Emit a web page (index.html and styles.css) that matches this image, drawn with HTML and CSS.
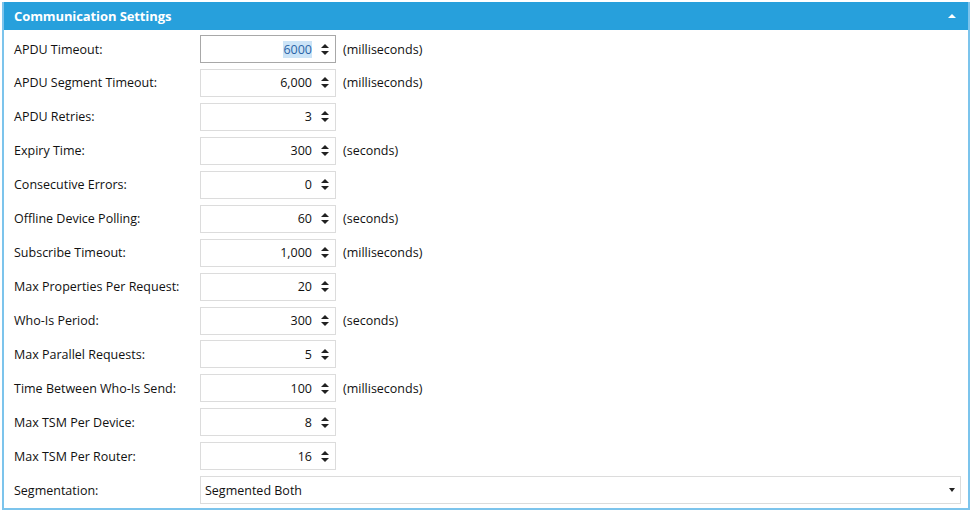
FILE: index.html
```html
<!DOCTYPE html>
<html>
<head>
<meta charset="utf-8">
<link rel="stylesheet" href="styles.css">
</head>
<body>
<div class="panel">
  <div class="header">
    <span class="title">Communication Settings</span>
    <span class="caret"></span>
  </div>
  <div class="body">
    <div class="row"><label>APDU Timeout:</label><div class="spin focused"><span class="val"><span class="sel">6000</span></span><span class="arrows"><i class="up"></i><i class="down"></i></span></div><span class="unit">(milliseconds)</span></div>
    <div class="row"><label>APDU Segment Timeout:</label><div class="spin"><span class="val">6,000</span><span class="arrows"><i class="up"></i><i class="down"></i></span></div><span class="unit">(milliseconds)</span></div>
    <div class="row"><label>APDU Retries:</label><div class="spin"><span class="val">3</span><span class="arrows"><i class="up"></i><i class="down"></i></span></div></div>
    <div class="row"><label>Expiry Time:</label><div class="spin"><span class="val">300</span><span class="arrows"><i class="up"></i><i class="down"></i></span></div><span class="unit">(seconds)</span></div>
    <div class="row"><label>Consecutive Errors:</label><div class="spin"><span class="val">0</span><span class="arrows"><i class="up"></i><i class="down"></i></span></div></div>
    <div class="row"><label>Offline Device Polling:</label><div class="spin"><span class="val">60</span><span class="arrows"><i class="up"></i><i class="down"></i></span></div><span class="unit">(seconds)</span></div>
    <div class="row"><label>Subscribe Timeout:</label><div class="spin"><span class="val">1,000</span><span class="arrows"><i class="up"></i><i class="down"></i></span></div><span class="unit">(milliseconds)</span></div>
    <div class="row"><label>Max Properties Per Request:</label><div class="spin"><span class="val">20</span><span class="arrows"><i class="up"></i><i class="down"></i></span></div></div>
    <div class="row"><label>Who-Is Period:</label><div class="spin"><span class="val">300</span><span class="arrows"><i class="up"></i><i class="down"></i></span></div><span class="unit">(seconds)</span></div>
    <div class="row"><label>Max Parallel Requests:</label><div class="spin"><span class="val">5</span><span class="arrows"><i class="up"></i><i class="down"></i></span></div></div>
    <div class="row"><label>Time Between Who-Is Send:</label><div class="spin"><span class="val">100</span><span class="arrows"><i class="up"></i><i class="down"></i></span></div><span class="unit">(milliseconds)</span></div>
    <div class="row"><label>Max TSM Per Device:</label><div class="spin"><span class="val">8</span><span class="arrows"><i class="up"></i><i class="down"></i></span></div></div>
    <div class="row"><label>Max TSM Per Router:</label><div class="spin"><span class="val">16</span><span class="arrows"><i class="up"></i><i class="down"></i></span></div></div>
    <div class="row"><label>Segmentation:</label><div class="select"><span>Segmented Both</span><i class="down"></i></div></div>
  </div>
</div>
</body>
</html>
```

FILE: styles.css
```css
html, body {
  margin: 0;
  padding: 0;
  background: #ffffff;
}
body {
  font-family: "Open Sans", "Noto Sans", sans-serif;
  font-size: 12.5px;
  color: #111111;
  padding: 2px 0 0 2px;
}
.panel {
  width: 964px;
  height: 506px;
  border: 2px solid #7cc4ec;
  border-top: none;
  box-sizing: content-box;
}
.header {
  height: 28px;
  background: #27a0dc;
  display: flex;
  align-items: center;
  justify-content: space-between;
  padding: 0 12px 0 10px;
  color: #ffffff;
}
.title {
  font-weight: bold;
  font-size: 13px;
  letter-spacing: -0.1px;
}
.caret {
  width: 0;
  height: 0;
  border-left: 4px solid transparent;
  border-right: 4px solid transparent;
  border-bottom: 4px solid #ffffff;
}
.body {
  padding: 5px 0 0 10px;
  display: flex;
  flex-direction: column;
  gap: 5.95px;
}
.row {
  display: flex;
  align-items: center;
  height: 28px;
}
.row label {
  width: 186px;
}
.spin {
  width: 134px;
  height: 26px;
  border: 1px solid #dcdcdc;
  display: flex;
  align-items: center;
  justify-content: flex-end;
  font-size: 12.5px;
}
.spin.focused {
  border-color: #a8a8a8;
}
.val {
  padding-right: 8px;
}
.sel {
  background: #cce4f7;
  color: #2a64a8;
}
.arrows {
  display: flex;
  flex-direction: column;
  gap: 3px;
  width: 10px;
  margin-right: 5px;
  align-items: center;
}
.arrows i, .select i {
  display: block;
  width: 0;
  height: 0;
  border-left: 4px solid transparent;
  border-right: 4px solid transparent;
}
.arrows .up {
  border-bottom: 4.5px solid #222;
}
.arrows .down, .select .down {
  border-top: 4.5px solid #222;
}
.select i {
  border-left-width: 3.5px;
  border-right-width: 3.5px;
}
.unit {
  margin-left: 7px;
}
.select {
  width: 750px;
  height: 26px;
  border: 1px solid #dcdcdc;
  display: flex;
  align-items: center;
  justify-content: space-between;
  padding: 0 5px 0 4px;
  font-size: 12.5px;
}
```
